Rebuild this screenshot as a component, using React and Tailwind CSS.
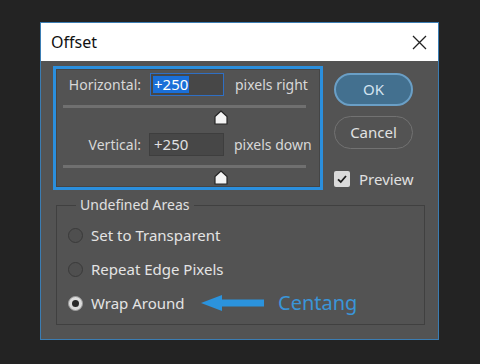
import React from "react";

function Thumb() {
  return (
    <svg width="14" height="15" viewBox="0 0 14 15" className="block">
      <path d="M7 1 L13 6.5 L13 14 L1 14 L1 6.5 Z" fill="#f4f4f4" stroke="#262626" strokeWidth="1.2" strokeLinejoin="round" />
    </svg>
  );
}

function Radio({ checked }) {
  return (
    <div className={"w-[15px] h-[15px] rounded-full border flex items-center justify-center " + (checked ? "bg-[#dcdcdc] border-[#9a9a9a]" : "bg-[#4f4f4f] border-[#3a3a3a]")}>
      {checked && <div className="w-[7px] h-[7px] rounded-full bg-[#2a2a2a]" />}
    </div>
  );
}

export default function App() {
  const font = { fontFamily: '"Noto Sans", "Open Sans", sans-serif' };
  return (
    <div className="w-[480px] h-[364px] bg-[#232323] pt-[22px] pl-[40px]" style={font}>
      <div className="w-[399px] h-[318px] border border-[#3b7db3] flex flex-col">
        <div className="h-[38px] bg-white flex items-center pl-[10px] pr-[11px] shrink-0">
          <span className="text-[16px] text-[#111] leading-none">Offset</span>
          <svg className="ml-auto" width="15" height="15" viewBox="0 0 15 15">
            <path d="M1 1 L14 14 M14 1 L1 14" stroke="#222" strokeWidth="1.3" />
          </svg>
        </div>
        <div className="flex-1 bg-[#535353] pl-[12px] pt-[5px] flex flex-col">
          <div className="flex">
            <div className="w-[270px] h-[124px] border-[3px] border-[#2b8fdd]">
              <div className="w-full h-full border border-[#454545] pt-[3px]">
                <div className="flex items-center h-[23px]">
                  <div className="w-[84px] text-right text-[14px] text-[#d8d8d8] leading-none">Horizontal:</div>
                  <div className="ml-[9px] w-[74px] h-[23px] bg-[#474747] border border-[#2f6fc4] flex items-center pl-[2px]">
                    <span className="bg-[#1a6fd8] text-white text-[15px] leading-[17px] px-[1px]">+250</span>
                  </div>
                  <div className="ml-[11px] text-[14px] text-[#d8d8d8] leading-none">pixels right</div>
                </div>
                <div className="mt-[9px] ml-[6px] w-[243px] h-[3px] bg-[#707070]" />
                <div className="mt-[2px] ml-[157px]"><Thumb /></div>
                <div className="flex items-center h-[23px] mt-[8px]">
                  <div className="w-[84px] text-right text-[14px] text-[#d8d8d8] leading-none">Vertical:</div>
                  <div className="ml-[8px] w-[75px] h-[23px] bg-[#474747] border border-[#3e3e3e] flex items-center pl-[4px]">
                    <span className="text-[#e0e0e0] text-[15px] leading-none">+250</span>
                  </div>
                  <div className="ml-[10px] text-[14px] text-[#d8d8d8] leading-none">pixels down</div>
                </div>
                <div className="mt-[9px] ml-[6px] w-[243px] h-[3px] bg-[#707070]" />
                <div className="mt-[2px] ml-[157px]"><Thumb /></div>
              </div>
            </div>
            <div className="ml-[11px] pt-[7px] flex flex-col">
              <div className="w-[79px] h-[33px] rounded-full bg-[#43708f] border-2 border-[#6a9fc6] flex items-center justify-center text-[15px] text-[#d2e3f0]">OK</div>
              <div className="mt-[10px] w-[79px] h-[33px] rounded-full border-[1.5px] border-[#727272] flex items-center justify-center text-[15px] text-[#e2e2e2]">Cancel</div>
              <div className="mt-[22px] flex items-center">
                <div className="w-[16px] h-[16px] rounded-[2px] bg-[#dadada] flex items-center justify-center">
                  <svg width="12" height="12" viewBox="0 0 12 12">
                    <path d="M2 6.3 L4.8 9 L10 3" fill="none" stroke="#1c1c1c" strokeWidth="1.8" />
                  </svg>
                </div>
                <span className="ml-[9px] text-[15px] text-[#e0e0e0] leading-none">Preview</span>
              </div>
            </div>
          </div>
          <fieldset className="mt-[5px] ml-[3px] w-[369px] h-[130px] border border-[#404040] pl-[11px]">
            <legend className="ml-[8px] px-[4px] text-[14px] text-[#e0e0e0] leading-[20px]">Undefined Areas</legend>
            <div className="pt-[3px]">
              <div className="h-[34px] flex items-center">
                <Radio />
                <span className="ml-[8px] text-[15px] text-[#e4e4e4] leading-none">Set to Transparent</span>
              </div>
              <div className="h-[34px] flex items-center">
                <Radio />
                <span className="ml-[8px] text-[15px] text-[#e4e4e4] leading-none">Repeat Edge Pixels</span>
              </div>
              <div className="h-[34px] flex items-center">
                <Radio checked />
                <span className="ml-[8px] w-[110px] text-[15px] text-[#e4e4e4] leading-none">Wrap Around</span>
                <svg width="63" height="18" viewBox="0 0 63 18" className="block">
                  <path d="M0 9 L21 1 L21 5.5 L63 5.5 L63 12.5 L21 12.5 L21 17 Z" fill="#2b93dd" />
                </svg>
                <span className="ml-[14px] text-[20px] text-[#3a95d8] leading-none">Centang</span>
              </div>
            </div>
          </fieldset>
        </div>
      </div>
    </div>
  );
}
